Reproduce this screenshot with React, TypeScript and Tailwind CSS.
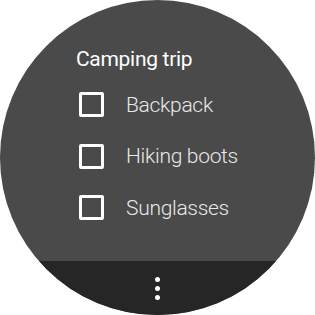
const items = ['Backpack', 'Hiking boots', 'Sunglasses'];

export default function App() {
  return (
    <div className="w-[315px] h-[315px] bg-white flex items-center justify-center" style={{ fontFamily: 'Roboto, "Liberation Sans", sans-serif' }}>
      <div className="w-[315px] h-[315px] rounded-full overflow-hidden bg-[#4a4a4a] flex flex-col">
        {/* Checklist */}
        <div className="flex-1 pt-[45px] pl-[76px]">
          <div className="text-[21px] leading-[28px] tracking-[-0.3px] text-white">Camping trip</div>
          <div className="mt-[6px] flex flex-col">
            {items.map((item) => (
              <div key={item} className="h-[51.5px] flex items-center gap-[22px] pl-[3px]">
                <div className="w-[25px] h-[25px] border-[3px] border-white rounded-[2px] shrink-0" />
                <span className="text-[21px] leading-[28px] tracking-[-0.3px] text-[#e8e8e8] font-light">{item}</span>
              </div>
            ))}
          </div>
        </div>
        {/* Action drawer peek */}
        <div className="h-[54px] bg-[#262626] flex flex-col items-center pt-[16px] gap-[4px]">
          <div className="w-[5px] h-[5px] rounded-full bg-white" />
          <div className="w-[5px] h-[5px] rounded-full bg-white" />
          <div className="w-[5px] h-[5px] rounded-full bg-white" />
        </div>
      </div>
    </div>
  );
}
